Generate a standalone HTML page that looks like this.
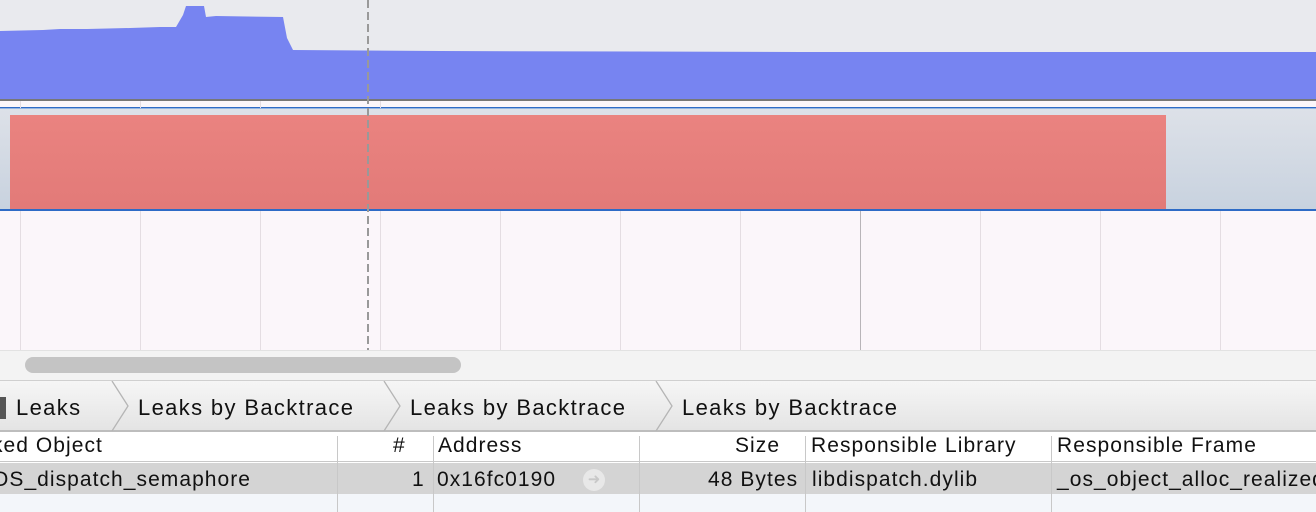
<!DOCTYPE html>
<html><head><meta charset="utf-8"><style>
*{margin:0;padding:0;box-sizing:border-box}
body{width:1316px;height:512px;overflow:hidden;background:#fff;font-family:"Liberation Sans",sans-serif;position:relative}
.a{position:absolute}
.t{font-size:21px;letter-spacing:1.05px;color:#111;white-space:nowrap;position:absolute}
.b{font-size:22px;letter-spacing:1.35px}
.vl{position:absolute;width:1px}
</style></head><body>
<div class="a" style="left:0;top:0;width:1316px;height:100px;background:#e9eaee"></div>
<svg class="a" style="left:0;top:0" width="1316" height="110">
<polygon fill="#7784f1" points="0,31 43,30 60,29 87,29 130,28 160,27 176,27 183,15 186,6 204,6 206,17 216,16 283,17 287,38 293,50 440,51 800,52 1316,52 1316,99 0,99"/>
<rect x="0" y="99" width="1316" height="2" fill="#777"/>
<rect x="0" y="101" width="1316" height="7" fill="#fbf6fa"/>
<rect x="0" y="107" width="1316" height="1.5" fill="#2e6bc6"/>
</svg>
<div class="a" style="left:0;top:109px;width:1316px;height:100px;background:linear-gradient(#dde1e8,#c8d2df)"></div>
<div class="a" style="left:10px;top:115px;width:1156px;height:94px;background:linear-gradient(#ea8380,#e27a78)"></div>
<div class="a" style="left:0;top:209px;width:1316px;height:1.5px;background:#2e6bc6"></div>
<div class="a" style="left:0;top:211px;width:1316px;height:139px;background:#fbf6fa"></div>
<div class="vl" style="left:20px;top:211px;height:139px;background:#e4dde2"></div>
<div class="vl" style="left:140px;top:211px;height:139px;background:#e4dde2"></div>
<div class="vl" style="left:260px;top:211px;height:139px;background:#e4dde2"></div>
<div class="vl" style="left:380px;top:211px;height:139px;background:#e4dde2"></div>
<div class="vl" style="left:500px;top:211px;height:139px;background:#e4dde2"></div>
<div class="vl" style="left:620px;top:211px;height:139px;background:#e4dde2"></div>
<div class="vl" style="left:740px;top:211px;height:139px;background:#e4dde2"></div>
<div class="vl" style="left:860px;top:211px;height:139px;background:#b8b4b8"></div>
<div class="vl" style="left:980px;top:211px;height:139px;background:#e4dde2"></div>
<div class="vl" style="left:1100px;top:211px;height:139px;background:#e4dde2"></div>
<div class="vl" style="left:1220px;top:211px;height:139px;background:#e4dde2"></div>
<div class="vl" style="left:20px;top:101px;height:7px;background:#e4dde2"></div>
<div class="vl" style="left:140px;top:101px;height:7px;background:#e4dde2"></div>
<div class="vl" style="left:260px;top:101px;height:7px;background:#e4dde2"></div>
<div class="vl" style="left:380px;top:101px;height:7px;background:#e4dde2"></div>
<div class="a" style="left:367px;top:0;width:2px;height:350px;background:repeating-linear-gradient(#999 0 8px,transparent 8px 12px)"></div>
<div class="a" style="left:0;top:350px;width:1316px;height:30px;background:#f3f3f3;border-top:1px solid #e2e2e2"></div>
<div class="a" style="left:25px;top:357px;width:436px;height:16px;border-radius:8px;background:#c4c4c4"></div>
<div class="a" style="left:0;top:380px;width:1316px;height:52px;background:linear-gradient(#f6f6f6,#e4e4e4);border-top:1px solid #d0d0d0;border-bottom:2px solid #bdbdbd"></div>
<div class="a" style="left:0;top:397px;width:6px;height:22px;background:#555"></div>
<svg class="a" style="left:0;top:381px" width="1316" height="50">
<polyline fill="none" stroke="#b5b5b5" stroke-width="1.3" points="112,0 128,25 112,50"/>
<polyline fill="none" stroke="#b5b5b5" stroke-width="1.3" points="384,0 400,25 384,50"/>
<polyline fill="none" stroke="#b5b5b5" stroke-width="1.3" points="656,0 672,25 656,50"/>
</svg>
<div class="t b" style="left:16px;top:395px">Leaks</div>
<div class="t b" style="left:138px;top:395px">Leaks by Backtrace</div>
<div class="t b" style="left:410px;top:395px">Leaks by Backtrace</div>
<div class="t b" style="left:682px;top:395px">Leaks by Backtrace</div>
<div class="a" style="left:0;top:432px;width:1316px;height:30px;background:#fff;border-bottom:1px solid #c8c8c8"></div>
<div class="t" style="left:-8px;top:434px">ked Object</div>
<div class="t" style="left:393px;top:434px">#</div>
<div class="t" style="left:438px;top:434px">Address</div>
<div class="t" style="left:735px;top:434px">Size</div>
<div class="t" style="left:811px;top:434px">Responsible Library</div>
<div class="t" style="left:1057px;top:434px">Responsible Frame</div>
<div class="a" style="left:0;top:463px;width:1316px;height:31px;background:#d4d4d4"></div>
<div class="a" style="left:0;top:494px;width:1316px;height:18px;background:#f3f6fa"></div>
<div class="t" style="left:-8px;top:468px">OS_dispatch_semaphore</div>
<div class="t" style="left:412px;top:468px">1</div>
<div class="t" style="left:437px;top:468px">0x16fc0190</div>
<div class="a" style="left:583px;top:469px;width:22px;height:22px;border-radius:50%;background:#e8e8e8;color:#c8c8c8;font-size:15px;line-height:22px;text-align:center">➜</div>
<div class="t" style="left:708px;top:468px">48 Bytes</div>
<div class="t" style="left:812px;top:468px">libdispatch.dylib</div>
<div class="t" style="left:1057px;top:468px">_os_object_alloc_realized</div>
<div class="vl" style="left:337px;top:436px;height:76px;background:#c8c8c8"></div>
<div class="vl" style="left:433px;top:436px;height:76px;background:#c8c8c8"></div>
<div class="vl" style="left:639px;top:436px;height:76px;background:#c8c8c8"></div>
<div class="vl" style="left:805px;top:436px;height:76px;background:#c8c8c8"></div>
<div class="vl" style="left:1051px;top:436px;height:76px;background:#c8c8c8"></div>
</body></html>
